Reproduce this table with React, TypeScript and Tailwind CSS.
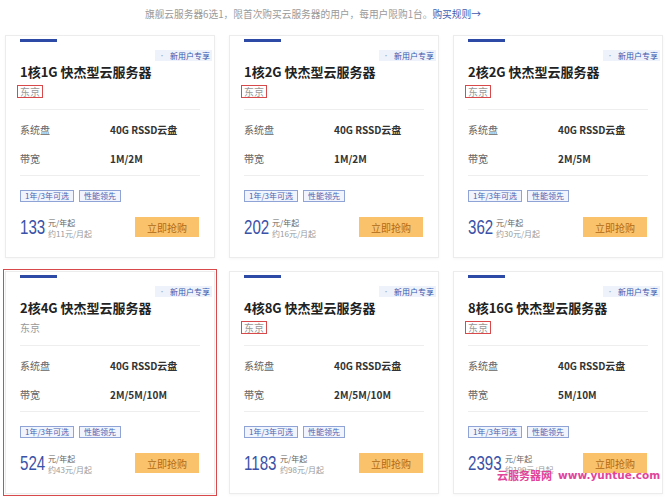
import React from 'react';

const cn = '"Noto Sans CJK SC", "Liberation Sans", sans-serif';

type Plan = {
  title: string;
  disk: string;
  bw: string;
  price: string;
  numW: string;
  month: string;
  mark: boolean;
  boxed?: boolean;
};

const plans: Plan[] = [
  { title: '1核1G 快杰型云服务器', disk: '40G RSSD云盘', bw: '1M/2M', price: '133', numW: 'w-[26px]', month: '约11元/月起', mark: true },
  { title: '1核2G 快杰型云服务器', disk: '40G RSSD云盘', bw: '1M/2M', price: '202', numW: 'w-[26px]', month: '约16元/月起', mark: true },
  { title: '2核2G 快杰型云服务器', disk: '40G RSSD云盘', bw: '2M/5M', price: '362', numW: 'w-[26px]', month: '约30元/月起', mark: true },
  { title: '2核4G 快杰型云服务器', disk: '40G RSSD云盘', bw: '2M/5M/10M', price: '524', numW: 'w-[26px]', month: '约43元/月起', mark: false, boxed: true },
  { title: '4核8G 快杰型云服务器', disk: '40G RSSD云盘', bw: '2M/5M/10M', price: '1183', numW: 'w-[34px]', month: '约98元/月起', mark: true },
  { title: '8核16G 快杰型云服务器', disk: '40G RSSD云盘', bw: '5M/10M', price: '2393', numW: 'w-[35px]', month: '约199元/月起', mark: true },
];

function Card({ p }: { p: Plan }) {
  return (
    <div
      className={
        'relative h-[223px] border border-[#ececec] bg-white px-[14px] shadow-[0_1px_3px_rgba(0,0,0,0.04)] ' +
        (p.boxed ? 'outline-1 outline-[#d8494b] outline-offset-[1px]' : '')
      }
    >
      <div className="mt-[3px] h-[3px] w-[37px] bg-[#2d4aa6]" />

      {/* badge */}
      <div className="absolute right-[2px] top-[14px] flex h-[11px] items-center gap-[5px] bg-[#eef2fa] pl-[4px] pr-[2px] text-[8px] leading-none text-[#3a56ad]">
        <span className="text-[6px] text-[#9aa6c8]">•</span>
        <span>新用户专享</span>
      </div>

      <div className="mt-[21px] text-[13px] font-bold leading-[18px] text-[#222]">{p.title}</div>

      <div className="mt-[3px] flex h-[14px] items-center">
        <span
          className={
            '-ml-[3px] px-[2px] text-[10px] leading-[11px] text-[#999] ' +
            (p.mark ? 'border border-[#d8494b]' : 'border border-transparent')
          }
        >
          东京
        </span>
      </div>

      <div className="mt-[11px] h-px bg-[#eeeeee]" />

      <div className="mt-[12px] flex h-[14px] items-center text-[10px]">
        <span className="w-[90px] text-[#666]">系统盘</span>
        <span className="font-bold text-[#333]">{p.disk}</span>
      </div>
      <div className="mt-[15px] flex h-[14px] items-center text-[10px]">
        <span className="w-[90px] text-[#666]">带宽</span>
        <span className="font-bold text-[#333]">{p.bw}</span>
      </div>

      <div className="mt-[10px] h-px bg-[#eeeeee]" />

      <div className="mt-[14px] flex gap-[5px]">
        <span className="flex h-[12px] items-center border border-[#8fa3d6] bg-[#f1f4fc] px-[4px] text-[8px] leading-none text-[#4a64b4]">
          1年/3年可选
        </span>
        <span className="flex h-[12px] items-center border border-[#8fa3d6] bg-[#f1f4fc] px-[4px] text-[8px] leading-none text-[#4a64b4]">
          性能领先
        </span>
      </div>

      <div className="mt-[13px] flex items-start justify-between pr-[1px]">
        <div className="flex items-start">
          <div className={'h-[22px] overflow-visible ' + p.numW}>
            <span
              className="inline-block origin-left scale-x-[0.72] text-[21px] leading-[21px] text-[#3a52a8]"
              style={{ fontFamily: '"Liberation Sans", sans-serif' }}
            >
              {p.price}
            </span>
          </div>
          <div className="ml-[2px] mt-[2px] flex flex-col text-[8px] leading-[11px]">
            <span className="text-[#666]">元/年起</span>
            <span className="text-[#999]">{p.month}</span>
          </div>
        </div>
        <button className="mt-[2px] flex h-[20px] w-[64px] items-center justify-center bg-[#fbc26c] text-[10px] text-[#b06a14]">
          立即抢购
        </button>
      </div>
    </div>
  );
}

export default function App() {
  return (
    <div className="relative h-[500px] w-[666px] overflow-hidden bg-white" style={{ fontFamily: cn }}>
      <div className="flex h-[28px] items-center whitespace-nowrap pl-[145px] text-[9.7px] text-[#9a9a9a]">
        旗舰云服务器6选1，限首次购买云服务器的用户，每用户限购1台。
        <span className="text-[#3f5bb3]">购买规则→</span>
      </div>

      <div className="mt-[7px] grid grid-cols-[210px_210px_210px] gap-x-[14px] gap-y-[13px] pl-[5px]">
        {plans.map((p) => (
          <Card key={p.title} p={p} />
        ))}
      </div>

      {/* watermark */}
      <div className="absolute left-[497px] top-[470px] flex items-center gap-[6px] whitespace-nowrap font-bold leading-none text-[#e2449a]">
        <span className="text-[11px]">云服务器网</span>
        <span style={{ fontFamily: '"DejaVu Sans", sans-serif' }} className="text-[10.5px]">
          www.yuntue.com
        </span>
      </div>
    </div>
  );
}
